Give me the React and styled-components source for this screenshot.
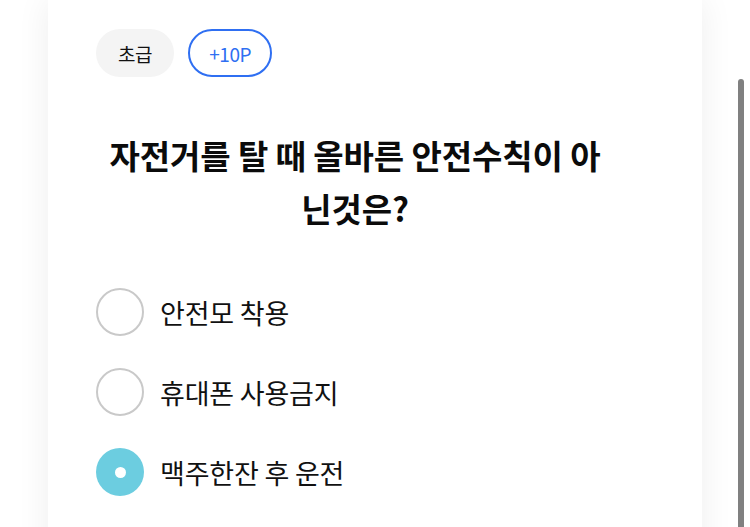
import React from "react";
import styled, { createGlobalStyle } from "styled-components";

const Global = createGlobalStyle`
  html, body { margin: 0; padding: 0; background: #ffffff; overflow: hidden; }
  body { font-family: "Noto Sans CJK KR", "Noto Sans", sans-serif; color: #111; }
`;

const Page = styled.div`
  width: 750px;
  height: 527px;
  overflow: hidden;
  position: relative;
  background: #ffffff;
`;

const Card = styled.main`
  width: 654px;
  min-height: 600px;
  margin-left: 48px;
  box-sizing: border-box;
  padding: 29px 48px 0 48px;
  background: #ffffff;
  box-shadow: 0 0 32px rgba(0, 0, 0, 0.07);
`;

const Chips = styled.div`
  display: flex;
  gap: 14px;
`;

const Chip = styled.span`
  display: inline-flex;
  align-items: center;
  justify-content: center;
  box-sizing: border-box;
  height: 48px;
  border-radius: 24px;
  padding: 0 ${(p) => (p.$outline ? "19px" : "22px")};
  font-size: 19px;
  letter-spacing: -0.4px;
  background: ${(p) => (p.$outline ? "#fff" : "#f4f4f4")};
  border: ${(p) => (p.$outline ? "2px solid #2f6ff2" : "none")};
  color: ${(p) => (p.$outline ? "#2f6ff2" : "#111")};
`;

const Title = styled.h1`
  margin: 52px 0 0 4px;
  width: 510px;
  font-size: 33px;
  line-height: 53px;
  font-weight: 700;
  text-align: center;
  color: #0b0b0b;
  letter-spacing: -0.1px;
`;

const Options = styled.ul`
  list-style: none;
  margin: 53px 0 0 0;
  padding: 0;
  display: flex;
  flex-direction: column;
  gap: 32px;
`;

const Option = styled.li`
  display: flex;
  align-items: center;
  gap: 16px;
  height: 48px;
`;

const Radio = styled.span`
  flex: none;
  width: 48px;
  height: 48px;
  box-sizing: border-box;
  border-radius: 50%;
  border: ${(p) => (p.$checked ? "none" : "2px solid #c9c9c9")};
  background: ${(p) => (p.$checked ? "#6ccde0" : "#fff")};
  display: flex;
  align-items: center;
  justify-content: center;
  &::after {
    content: "";
    display: ${(p) => (p.$checked ? "block" : "none")};
    width: 11px;
    height: 11px;
    border-radius: 50%;
    background: #fff;
  }
`;

const Label = styled.span`
  font-size: 27px;
  color: #111;
  letter-spacing: -0.2px;
`;

const ScrollThumb = styled.div`
  position: absolute;
  right: 6px;
  top: 79px;
  bottom: 0;
  width: 6px;
  border-radius: 3px 3px 0 0;
  background: #808080;
`;

const options = [
  { text: "안전모 착용", checked: false },
  { text: "휴대폰 사용금지", checked: false },
  { text: "맥주한잔 후 운전", checked: true },
];

export default function App() {
  return (
    <Page>
      <Global />
      <Card>
        <Chips>
          <Chip>초급</Chip>
          <Chip $outline>+10P</Chip>
        </Chips>
        <Title>자전거를 탈 때 올바른 안전수칙이 아닌것은?</Title>
        <Options>
          {options.map((o) => (
            <Option key={o.text}>
              <Radio $checked={o.checked} />
              <Label>{o.text}</Label>
            </Option>
          ))}
        </Options>
      </Card>
      <ScrollThumb />
    </Page>
  );
}
